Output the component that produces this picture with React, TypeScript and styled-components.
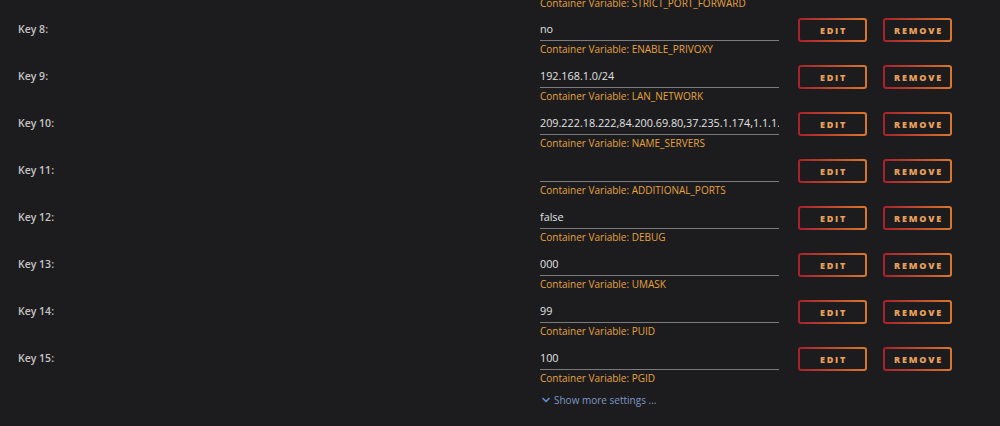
import React from "react";
import styled, { createGlobalStyle } from "styled-components";
import { ChevronDown } from "lucide-react";

const GlobalStyle = createGlobalStyle`
  html, body {
    margin: 0;
    padding: 0;
    background: #1c1c1e;
    font-family: "Open Sans", "Noto Sans", sans-serif;
    overflow: hidden;
  }
`;

const rows = [
  { key: 8, value: "no", name: "ENABLE_PRIVOXY" },
  { key: 9, value: "192.168.1.0/24", name: "LAN_NETWORK" },
  { key: 10, value: "209.222.18.222,84.200.69.80,37.235.1.174,1.1.1.", name: "NAME_SERVERS" },
  { key: 11, value: "", name: "ADDITIONAL_PORTS" },
  { key: 12, value: "false", name: "DEBUG" },
  { key: 13, value: "000", name: "UMASK" },
  { key: 14, value: "99", name: "PUID" },
  { key: 15, value: "100", name: "PGID" },
];

const Page = styled.div`
  height: 426px;
  overflow: hidden;
`;

const List = styled.div`
  display: flex;
  flex-direction: column;
`;

const Row = styled.div`
  display: flex;
  align-items: flex-start;
  padding-left: 18px;
  height: 47px;
`;

const Label = styled.div`
  width: 522px;
  flex: none;
  padding-top: 8px;
  line-height: 20px;
  font-size: 10.5px;
  font-weight: 600;
  color: #c4c4c4;
`;

const Field = styled.div`
  width: 239px;
  flex: none;
  display: flex;
  flex-direction: column;
  padding-top: 8px;
`;

const Value = styled.div`
  height: 21px;
  line-height: 20px;
  font-size: 10.8px;
  color: #e2e2e2;
  border-bottom: 1px solid #7c7c7c;
  white-space: nowrap;
  overflow: hidden;
`;

const Hint = styled.div`
  line-height: 16px;
  font-size: 10px;
  color: #e5a33f;
  white-space: nowrap;
`;

const TopHint = styled(Hint)`
  margin: -5px 0 0 540px;
  height: 16px;
`;

const Button = styled.button<{ $gap: number }>`
  flex: none;
  margin-top: 7px;
  margin-left: ${(p) => p.$gap}px;
  width: 69px;
  height: 24px;
  border: 2px solid transparent;
  border-radius: 3px;
  background:
    linear-gradient(#1c1c1e, #1c1c1e) padding-box,
    linear-gradient(90deg, #a8202c, #d9772e) border-box;
  color: #e8a05c;
  font-family: "Open Sans", sans-serif;
  font-size: 9px;
  font-weight: 800;
  letter-spacing: 1.8px;
  padding: 0 0 0 2px;
  cursor: pointer;
`;

const More = styled.div`
  margin-left: 540px;
  margin-top: 5px;
  display: flex;
  align-items: center;
  gap: 2px;
  font-size: 10px;
  color: #7d98c6;
  line-height: 16px;
`;

export default function App() {
  return (
    <Page>
      <GlobalStyle />
      <TopHint>Container Variable: STRICT_PORT_FORWARD</TopHint>
      <List>
        {rows.map((r) => (
          <Row key={r.key}>
            <Label>Key {r.key}:</Label>
            <Field>
              <Value>{r.value}</Value>
              <Hint>Container Variable: {r.name}</Hint>
            </Field>
            <Button $gap={19}>EDIT</Button>
            <Button $gap={16}>REMOVE</Button>
          </Row>
        ))}
      </List>
      <More>
        <ChevronDown size={12} strokeWidth={3.5} color="#5d8ad0" />
        Show more settings ...
      </More>
    </Page>
  );
}
